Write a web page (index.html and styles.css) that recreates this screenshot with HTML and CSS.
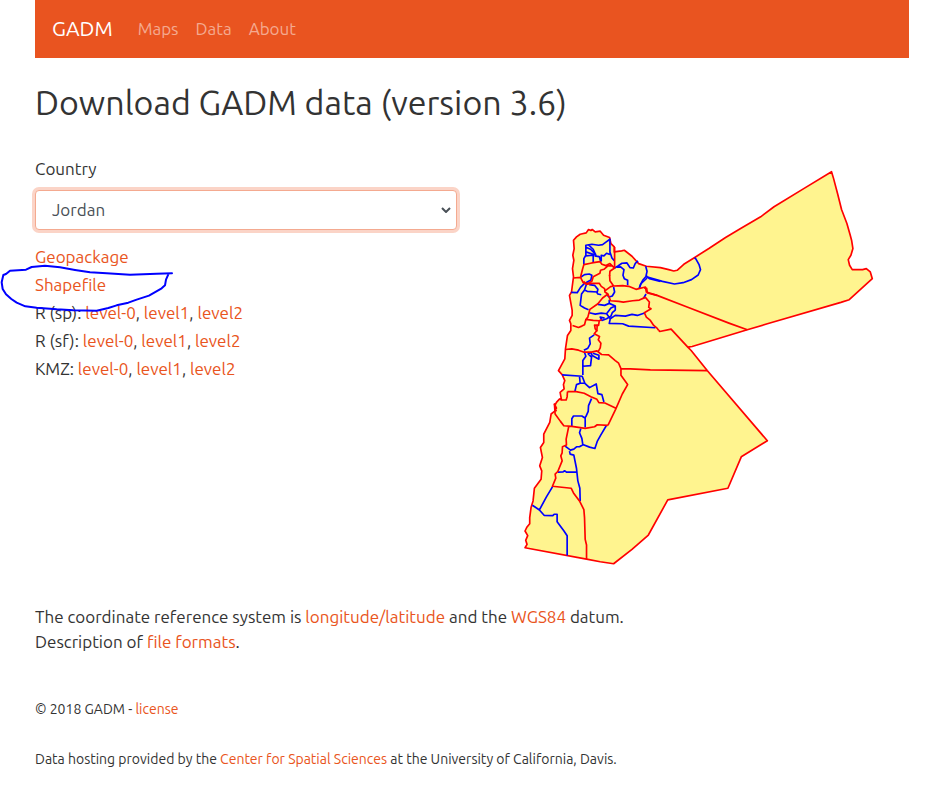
FILE: index.html
```html
<!DOCTYPE html>
<html lang="en">
<head>
<meta charset="utf-8">
<meta name="viewport" content="width=device-width, initial-scale=1">
<title>GADM</title>
<link rel="stylesheet" href="styles.css">
</head>
<body>
<div class="page">
  <nav class="navbar">
    <a class="brand" href="#">GADM</a>
    <a class="nav-link" href="#">Maps</a>
    <a class="nav-link" href="#">Data</a>
    <a class="nav-link" href="#">About</a>
  </nav>
  <main>
    <h1>Download GADM data (version 3.6)</h1>
    <div class="columns">
      <section>
        <label class="label" for="country">Country</label>
        <div class="select-wrap">
          <select class="select" id="country"><option>Jordan</option></select>
          <svg class="chevron" viewBox="0 0 10 6" aria-hidden="true"><path d="M1 1l4 4 4-4"/></svg>
        </div>
        <div class="downloads">
          <div><a href="#">Geopackage</a></div>
          <div><a href="#">Shapefile</a></div>
          <div>R (sp): <a href="#">level-0</a>, <a href="#">level1</a>, <a href="#">level2</a></div>
          <div>R (sf): <a href="#">level-0</a>, <a href="#">level1</a>, <a href="#">level2</a></div>
          <div>KMZ: <a href="#">level-0</a>, <a href="#">level1</a>, <a href="#">level2</a></div>
          <svg class="scribble" viewBox="0 340 525 150" aria-hidden="true"><path d="M516 371L470 372 390 375 320 371 270 368 225 361 180 353 135 348 95 352 78 360 30 363 18 373 10 376 5 398 8 418 18 434 34 448 50 459 76 470 110 474 170 479 220 482 290 483 325 475 350 467 385 459 410 450 447 438 485 416 495 407 498 390 505 374"/></svg>
        </div>
      </section>
      <svg class="map" viewBox="0 0 1095 1230" role="img" aria-label="Map of Jordan">
        <path class="land" d="M175 240L184 230 195 222 213 218 220 208 227 211 231 208 240 215 255 213 265 225 283 232 287 250 297 260 297 275 319 272 327 270 350 288 370 310 393 318 435 322 460 328 475 332 485 330 505 312 540 290 580 265 630 232 675 205 735 170 775 140 865 85 947 35 953 55 965 100 977 148 993 190 1003 225 1007 240 1011 265 1005 285 997 298 1001 315 1009 328 1040 328 1051 325 1063 335 1069 355 1000 418 975 426 755 490 695 508 530 558 517 560 527 570 575 630 755 840 677 888 637 982 457 1017 399 1122 350 1165 295 1208 255 1202 214 1194 30 1160 36 1150 32 1138 38 1124 30 1110 36 1098 44 1088 44 1070 48 1040 54 1020 58 982 78 955 80 930 74 915 82 890 76 860 86 845 86 820 104 785 108 760 118 752 124 742 118 730 123 750 119 735 124 725 133 715 139 718 135 695 147 685 145 672 149 660 141 642 130 630 149 595 151 565 157 525 167 510 167 490 163 480 171 465 171 450 163 405 169 395 171 380 175 350 172 325 176 300 173 285 177 265Z"/>
        <g class="district">
          <g transform="translate(150 195)">
            <path d="M56 118L56 100 62 90 62 60 80 57 100 60 112 58 120 52 134 42 134 80 140 98 147 106M62 66L76 72 92 88M70 59L84 72 92 90 62 80M84 88L84 112M62 92L82 90M88 92L102 94 107 110M108 108V90L116 92 124 84 134 88"/>
            <path d="M148 128L158 122 170 114 185 113 194 127 204 128 210 114 218 107M155 126L166 125 176 133 173 150 177 160 187 165 187 180M241 123L245 138 242 152 252 160 285 168M245 150L232 165 227 175 222 188M46 156L58 148 72 146 80 150 77 164 62 172"/>
          </g>
          <g transform="translate(150 345)">
            <path d="M18 51L36 52 46 36 58 24M64 26L58 44 49 56 45 90 58 98 70 103M72 28L88 30 98 42 96 50 66 48 58 44M94 50L98 56 108 58M145 35L148 50 141 62 132 65 124 58M222 38L226 26 245 8M234 70L242 56M132 73L132 84 118 90 98 87M132 84L150 92 150 104 141 112 137 122 124 130 110 135 105 125 118 128M72 112L90 116 108 113 124 115 137 98 150 92M124 115L135 130 150 120 180 122 200 117 216 120 240 112M135 130L132 144 172 145 190 152 270 157"/>
          </g>
          <g transform="translate(105 450)">
            <path d="M132 73L118 83 120 100 113 113 101 119M102 123L107 137 98 150V193M98 167L121 165 124 140 114 130 122 126 126 135 146 146 146 134 128 128M36 193L96 197 104 218 90 218 88 198M90 218L79 222 74 243M104 218L118 231 138 220 143 249 155 252 161 274"/>
          </g>
          <g transform="translate(0 720)">
            <path d="M229 -6L220 15 219 32 212 48 208 51 200 46H175L170 54V77M210 48V80M197 83L193 96 200 113 203 132 193 138H184L176 145 166 148 150 136M203 131L223 139 239 143 246 122 256 104 273 75M163 151L165 160 176 163 184 203 188 240 194 262 195 300M128 214L144 213 149 210 154 214H186M112 258L94 288 73 327 52 313M73 327L87 343 113 344 117 340H126L126 362 146 389 156 404V463"/>
          </g>
          <path d="M396 350L441 363 477 371 503 367 528 358 548 344 555 328 551 314 541 296 537 292"/>
        </g>
        <g class="region">
          <g transform="translate(150 195)">
            <path d="M24 158L46 156 52 132 56 118 80 113 104 109 110 117 122 121 134 115 147 128M148 65V128L134 138 133 152M143 122L128 122 116 132 106 135 104 144 84 154 80 168 66 175 54 172 46 156"/>
          </g>
          <g transform="translate(150 345)">
            <path d="M55 18L64 27 78 24 102 24 108 33 118 40 119 50 128 56 136 76 160 78 174 80 202 76 222 74 240 66 252 80 250 96 257 100 237 112 243 125 255 135 265 150 275 158 280 165M133 0L134 16 145 32 136 34 117 48M145 32L172 31 190 33 212 42 240 35 243 50 275 60M128 56L112 68 98 85 74 102 68 125 62 132 84 135 102 136 110 132M62 132L58 148 50 152 40 156 22 150M102 136L100 150 88 149 90 160 96 168"/>
          </g>
          <g transform="translate(105 450)">
            <path d="M141 42L140 60 132 70 148 78 144 88 152 98 150 112 143 125M46 117L65 115 85 119 102 125 124 125 140 121 154 132 175 133 195 150 205 158 212 174 240 175 300 178 470 180M212 174V194L232 222 216 250 196 296 173 344M52 243H78L102 248 122 258 140 266 146 276 164 277 197 293M35 268H48L51 258 52 243"/>
          </g>
          <g transform="translate(0 720)">
            <path d="M118 10L120 40 136 62 146 75 170 77 210 83 238 78 246 72 278 74M161 76L153 115 154 133 142 138 141 156 137 165 141 180 128 212 120 220 122 232 112 256 168 262 176 278 194 302 206 326 208 350 210 415 214 432V474"/>
          </g>
          <path d="M386 383L394 384 396 398 425 405 515 440 640 488 695 508M430 510L433 513 467 506 517 560"/>
        </g>
      </svg>
    </div>
    <p class="notes">The coordinate reference system is <a href="#">longitude/latitude</a> and the <a href="#">WGS84</a> datum.<br>Description of <a href="#">file formats</a>.</p>
  </main>
  <footer>
    <p>© 2018 GADM - <a href="#">license</a></p>
    <p>Data hosting provided by the <a href="#">Center for Spatial Sciences</a> at the University of California, Davis.</p>
  </footer>
</div>
</body>
</html>
```

FILE: styles.css
```css
* { box-sizing: border-box; }
body {
  margin: 0;
  background: #fff;
  color: #333;
  font: 17px/25px Ubuntu, "Noto Sans", sans-serif;
}
a { color: #e95420; text-decoration: none; }
p { margin: 0; }
.page { padding: 0 18px 0 35px; }
.navbar {
  display: flex;
  align-items: center;
  gap: 17px;
  height: 58px;
  padding: 0 17px 2px;
  background: #e95420;
}
.navbar .brand { color: #fff; font-size: 21px; margin-right: 8px; }
.navbar .nav-link { color: #f4aa90; }
h1 { margin: 23px 0 33px; font-size: 34px; line-height: 42px; font-weight: 400; }
.columns {
  display: grid;
  grid-template-columns: repeat(2, minmax(0, 1fr));
  column-gap: 30px;
}
.label { display: block; margin-bottom: 9px; }
.select-wrap { position: relative; }
.select {
  display: block;
  width: 100%;
  height: 40px;
  padding: 0 16px 2px;
  appearance: none;
  border: 1px solid #f4aa90;
  border-radius: 4px;
  box-shadow: 0 0 0 3px #fbd4c7;
  outline: 0;
  background: #fff;
  color: #495057;
  font: inherit;
}
.chevron {
  position: absolute;
  right: 6px;
  top: 17px;
  width: 10px;
  height: 6px;
  fill: none;
  stroke: #495057;
  stroke-width: 2;
}
.downloads { position: relative; margin-top: 13px; line-height: 28px; }
.scribble {
  position: absolute;
  left: -35px;
  top: 20px;
  width: 175px;
  height: 50px;
  fill: none;
  stroke: #00f;
  stroke-width: 6;
  stroke-linejoin: round;
  stroke-linecap: round;
  pointer-events: none;
}
.map {
  justify-self: center;
  width: 100%;
  max-width: 366px;
  margin-top: 4px;
  fill: none;
  stroke-width: 5;
  stroke-linejoin: round;
}
.land { fill: #fff48f; stroke: #f00; }
.district { stroke: #00f; }
.region { stroke: #f00; }
.notes { margin-top: 33px; }
footer { margin-top: 43px; font-size: 14px; }
footer p + p { margin-top: 25px; }
```
